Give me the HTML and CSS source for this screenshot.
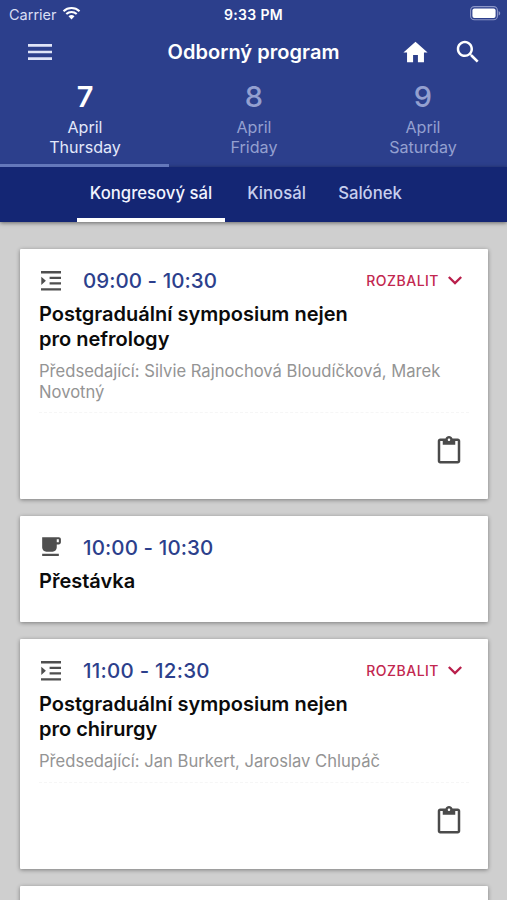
FILE: index.html
```html
<!DOCTYPE html>
<html lang="cs">
<head>
    <meta charset="UTF-8">
    <meta name="viewport" content="width=device-width, initial-scale=1.0">
    <title>Odborný program</title>
    <link rel="stylesheet" href="styles.css">
</head>
<body>
    <svg class="sprite" width="0" height="0">
        <symbol id="icon-list" viewBox="0 0 20 20">
            <path d="M0 0h20v2.4H0zM8.6 5.7H20v2.4H8.6zM8.6 11.2H20v2.4H8.6zM0 17.2h20v2.4H0zM0.3 5.7v8.2L4.9 9.8z"/>
        </symbol>
        <symbol id="icon-clipboard" viewBox="0 0 24 24">
            <path d="M19 2h-4.18C14.4.84 13.3 0 12 0c-1.3 0-2.4.84-2.82 2H5c-1.1 0-2 .9-2 2v16c0 1.1.9 2 2 2h14c1.1 0 2-.9 2-2V4c0-1.1-.9-2-2-2zm-7 0c.55 0 1 .45 1 1s-.45 1-1 1-1-.45-1-1 .45-1 1-1zm7 18H5V4h2v3h10V4h2v16z"/>
        </symbol>
        <symbol id="icon-chevron" viewBox="0 0 24 24">
            <path d="M7.41 7.84L12 12.42l4.59-4.58L18 9.25l-6 6-6-6z"/>
        </symbol>
    </svg>

    <header class="header">
        <div class="status-bar">
            <div class="carrier">
                <span>Carrier</span>
                <svg class="wifi" viewBox="0 0 18 14">
                    <path d="M1 5.2a11.6 11.6 0 0 1 16 0M3.8 8.1a7.6 7.6 0 0 1 10.4 0" fill="none" stroke="#fff" stroke-width="2.1"/>
                    <path d="M9 13.4l-3-3.1a4.4 4.4 0 0 1 6 0z" fill="#fff"/>
                </svg>
            </div>
            <div class="clock">9:33 PM</div>
            <svg class="battery" viewBox="0 0 31 15">
                <rect x="0.6" y="0.6" width="26.8" height="13.2" rx="3.8" fill="none" stroke="#8d97c8" stroke-width="1.1"/>
                <rect x="2.4" y="2.4" width="23.2" height="9.6" rx="2" fill="#fff"/>
                <path d="M28.6 5v4.6c1-.4 1.6-1.3 1.6-2.3s-.6-1.9-1.6-2.3z" fill="#8d97c8"/>
            </svg>
        </div>

        <div class="toolbar">
            <svg class="icon-menu" viewBox="0 0 24 24"><path d="M3 18h18v-2H3v2zm0-5h18v-2H3v2zm0-7v2h18V6H3z"/></svg>
            <h1>Odborný program</h1>
            <div class="actions">
                <svg class="icon-home" viewBox="0 0 24 24"><path d="M10 20v-6h4v6h5v-8h3L12 3 2 12h3v8z"/></svg>
                <svg class="icon-search" viewBox="0 0 24 24"><path d="M15.5 14h-.79l-.28-.27C15.41 12.59 16 11.11 16 9.5 16 5.91 13.09 3 9.5 3S3 5.91 3 9.5 5.91 16 9.5 16c1.61 0 3.09-.59 4.23-1.57l.27.28v.79l5 4.99L20.49 19l-4.99-5zm-6 0C7.01 14 5 11.99 5 9.5S7.01 5 9.5 5 14 7.01 14 9.5 11.99 14 9.5 14z"/></svg>
            </div>
        </div>

        <nav class="days">
            <div class="day active">
                <strong>7</strong>
                <span>April</span>
                <span>Thursday</span>
            </div>
            <div class="day">
                <strong>8</strong>
                <span>April</span>
                <span>Friday</span>
            </div>
            <div class="day">
                <strong>9</strong>
                <span>April</span>
                <span>Saturday</span>
            </div>
        </nav>
    </header>

    <nav class="halls">
        <div class="hall hall-main active"><span>Kongresový sál</span></div>
        <div class="hall hall-kino"><span>Kinosál</span></div>
        <div class="hall hall-salonek"><span>Salónek</span></div>
    </nav>

    <main class="program">
        <article class="card">
            <div class="card-top">
                <svg class="icon-list"><use href="#icon-list"/></svg>
                <span class="time">09:00 - 10:30</span>
                <span class="expand">ROZBALIT <svg class="chevron"><use href="#icon-chevron"/></svg></span>
            </div>
            <h2>Postgraduální symposium nejen<br>pro nefrology</h2>
            <p class="chairs">Předsedající: Silvie Rajnochová Bloudíčková, Marek<br>Novotný</p>
            <div class="card-actions">
                <svg class="clipboard"><use href="#icon-clipboard"/></svg>
            </div>
        </article>

        <article class="card card-break">
            <div class="card-top">
                <svg class="icon-cup" viewBox="0 0 24 24"><path d="M20 3H4v10c0 2.21 1.79 4 4 4h6c2.21 0 4-1.79 4-4v-3h2c1.11 0 2-.89 2-2V5c0-1.11-.89-2-2-2zm0 5h-2V5h2v3zM4 19h16v2H4z"/></svg>
                <span class="time time-10">10:00 - 10:30</span>
            </div>
            <h2>Přestávka</h2>
        </article>

        <article class="card">
            <div class="card-top">
                <svg class="icon-list"><use href="#icon-list"/></svg>
                <span class="time time-11">11:00 - 12:30</span>
                <span class="expand">ROZBALIT <svg class="chevron"><use href="#icon-chevron"/></svg></span>
            </div>
            <h2>Postgraduální symposium nejen<br>pro chirurgy</h2>
            <p class="chairs">Předsedající: Jan Burkert, Jaroslav Chlupáč</p>
            <div class="card-actions">
                <svg class="clipboard"><use href="#icon-clipboard"/></svg>
            </div>
        </article>

        <article class="card card-next"></article>
    </main>
</body>
</html>
```
FILE: styles.css
```css
* { box-sizing: border-box; }
body { font-family: Inter, "Liberation Sans", sans-serif; margin: 0; height: 900px; overflow: hidden; background: #cfcfcf; color: #0b0b0b; }
h1, h2, p { margin: 0; }
svg { display: block; flex: none; }
.sprite { display: none; }

.header { background: #2c3f8c; color: #fff; height: 167px; }
.status-bar { display: grid; grid-template-columns: 1fr auto 1fr; align-items: center; height: 28px; padding: 0 6px 0 9px; }
.carrier { display: flex; align-items: center; gap: 5px; font-size: 14.5px; color: #d9def4; }
.wifi { width: 19px; height: 14px; margin-top: -2px; }
.clock { font-size: 14px; font-weight: 600; letter-spacing: 0.35px; margin-right: 3px; }
.battery { width: 31px; height: 15px; margin-top: -1px; justify-self: end; }

.toolbar { display: grid; grid-template-columns: 1fr auto 1fr; align-items: center; height: 48px; padding: 0 24px; fill: #fff; }
.toolbar h1 { font-size: 20px; font-weight: 600; letter-spacing: 0.05px; }
.icon-menu { width: 32px; height: 32px; fill: #dfe4f8; }
.actions { display: flex; align-items: center; justify-content: flex-end; gap: 23px; }
.icon-home { width: 29px; height: 29px; }
.icon-search { width: 30px; height: 30px; }

.days { display: grid; grid-template-columns: repeat(3, 1fr); height: 91px; }
.day { display: flex; flex-direction: column; align-items: center; padding: 4px 0 0 1px; border-bottom: 3px solid transparent; font-size: 16.1px; line-height: 20px; color: #94a0d0; }
.day strong { font-size: 29px; font-weight: 500; line-height: 34px; margin-bottom: 3px; }
.day.active { color: #e3e8fa; border-color: #6478bb; }
.day.active strong { color: #fff; font-weight: 600; }

.halls { display: flex; height: 55px; padding-left: 77px; background: #142674; box-shadow: 0 1px 4px rgba(0, 0, 0, 0.5); }
.hall { display: flex; align-items: center; justify-content: center; border-bottom: 4px solid transparent; font-size: 16.7px; font-weight: 500; color: #c7cfee; }
.hall.active { color: #f2f4ff; border-color: #fff; }
.hall-main { width: 148px; }
.hall-kino { width: 103px; }
.hall-salonek { width: 84px; }

.program { display: flex; flex-direction: column; gap: 17px; padding: 27px 19px 0 20px; }
.card { padding: 19px 19px 0; background: #fff; border-radius: 1px; box-shadow: 0 1px 4px rgba(0, 0, 0, 0.4); }
.card-top { display: flex; align-items: center; height: 25px; }
.icon-list { width: 20px; height: 20px; margin: 0 22px 0 2px; fill: #4f4f4f; }
.icon-cup { width: 25px; height: 25px; margin: -2px 20px 0 -1px; fill: #4f4f4f; }
.time { font-size: 20.5px; font-weight: 500; letter-spacing: 0.05px; color: #2c3f8c; }
.time-10 { letter-spacing: 0.12px; }
.time-11 { letter-spacing: 0.25px; }
.expand { display: flex; align-items: center; gap: 2px; margin-left: auto; font-size: 14px; font-weight: 500; letter-spacing: 0.5px; color: #c2274f; }
.chevron { width: 28px; height: 28px; fill: #b91f4b; }
.card h2 { margin-top: 9px; font-size: 20px; font-weight: 600; line-height: 24.5px; }
.chairs { margin-top: 10px; padding-bottom: 10px; border-bottom: 1px dashed #f6f6f6; font-size: 16.6px; line-height: 20.5px; color: #949494; white-space: nowrap; }
.card-actions { display: flex; justify-content: flex-end; height: 86px; padding: 23px 5px 0 0; }
.clipboard { width: 30px; height: 30px; fill: #4b4b4b; }
.card-break { height: 106px; }
.card-next { height: 15px; }
```
